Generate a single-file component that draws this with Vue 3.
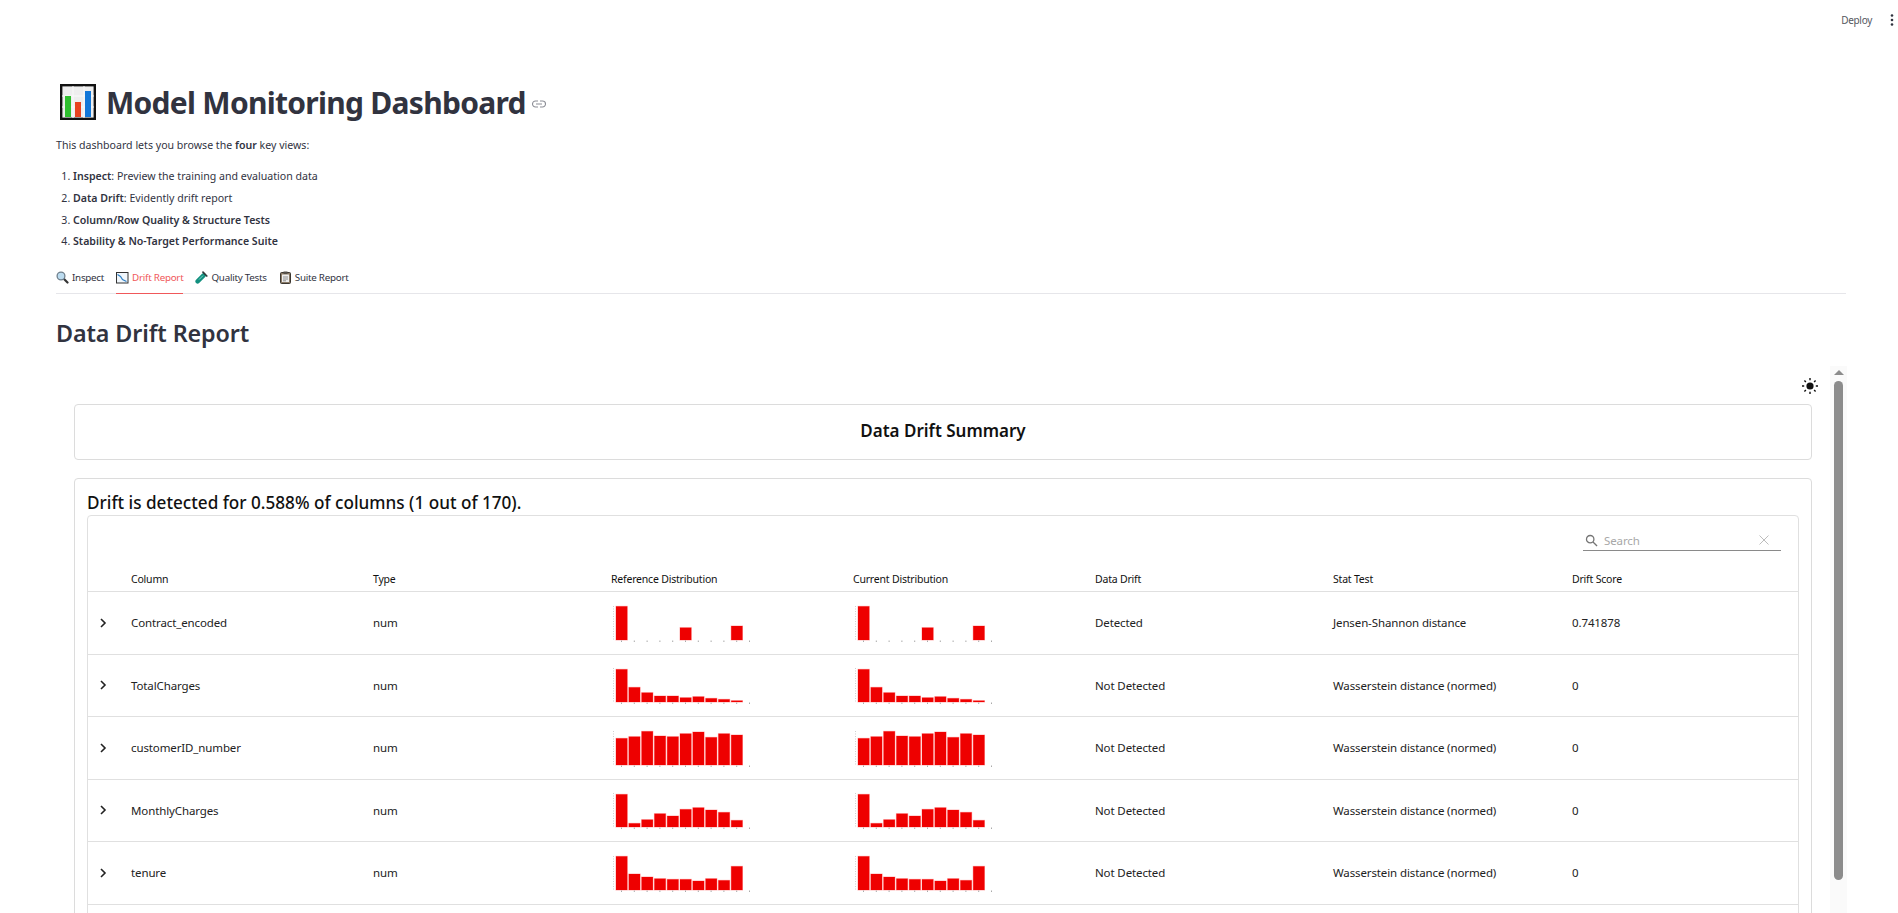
<template>
  <div class="app">
    <header class="toolbar">
      <span class="deploy">Deploy</span>
      <svg class="kebab" viewBox="0 0 4 14" width="4" height="14">
        <circle cx="2" cy="2.5" r="1.3" />
        <circle cx="2" cy="7" r="1.3" />
        <circle cx="2" cy="11.5" r="1.3" />
      </svg>
    </header>

    <main class="main">
      <h1 class="title">
        <svg class="title-icon" viewBox="0 0 36 36" width="36" height="36">
          <rect x="1.2" y="1.2" width="33.6" height="33.6" fill="#eeeeee" stroke="#111" stroke-width="2.4" />
          <path d="M2 12h32M2 23h32M13 2v32M24 2v32" stroke="#fafafa" stroke-width="1" />
          <rect x="5" y="12" width="6" height="21" fill="#2fbf2f" />
          <rect x="15" y="18" width="6" height="15" fill="#e8431f" />
          <rect x="25" y="7" width="6" height="26" fill="#1277d8" />
        </svg>
        <span>Model Monitoring Dashboard</span>
        <svg class="link-icon" viewBox="0 0 14 8" width="14" height="8" fill="none" stroke="#8c8e96" stroke-width="1.1">
          <path d="M6 1H3.5a3 3 0 0 0 0 6H6M8 1h2.5a3 3 0 0 1 0 6H8M4 4h6" />
        </svg>
      </h1>

      <p class="intro">This dashboard lets you browse the <strong>four</strong> key views:</p>
      <ol class="views">
        <li><strong>Inspect</strong>: Preview the training and evaluation data</li>
        <li><strong>Data Drift</strong>: Evidently drift report</li>
        <li><strong>Column/Row Quality &amp; Structure Tests</strong></li>
        <li><strong>Stability &amp; No-Target Performance Suite</strong></li>
      </ol>

      <nav class="tabs">
        <div class="tab">
          <svg viewBox="0 0 13 13" width="13" height="13">
            <path d="M7.5 7.5l4 4" stroke="#333" stroke-width="2.2" stroke-linecap="round" />
            <circle cx="5" cy="5" r="3.9" fill="#bcdcf0" stroke="#6f7f8c" stroke-width="1.3" />
          </svg>
          <span>Inspect</span>
        </div>
        <div class="tab active">
          <svg viewBox="0 0 13 13" width="13" height="13" fill="none">
            <rect x="0.5" y="1.5" width="11.5" height="10.5" fill="#f0f6fb" stroke="#333" />
            <path d="M1.5 3.5l3 2 2 3 4 2" stroke="#2f7fc4" stroke-width="1.2" />
          </svg>
          <span>Drift Report</span>
        </div>
        <div class="tab">
          <svg viewBox="0 0 13 13" width="13" height="13" fill="none">
            <path d="M2.6 10.4L8.6 4.4" stroke="#12907f" stroke-width="4.4" stroke-linecap="round" />
            <path d="M4 8.6L8 4.6" stroke="#7fd6c8" stroke-width="1" />
            <path d="M8 1.2l3.8 3.8" stroke="#2f3a3a" stroke-width="1.7" stroke-linecap="round" />
          </svg>
          <span>Quality Tests</span>
        </div>
        <div class="tab">
          <svg viewBox="0 0 13 13" width="13" height="13">
            <rect x="1.5" y="1.5" width="10" height="11" rx="1" fill="#8a7a66" stroke="#3b3630" />
            <rect x="3" y="3.5" width="7" height="7.5" fill="#eeeeee" />
            <rect x="4.5" y="0.5" width="4" height="2.5" fill="#55504a" />
            <path d="M4 6h5M4 8h5M4 9.8h3" stroke="#777" stroke-width="0.8" />
          </svg>
          <span>Suite Report</span>
        </div>
      </nav>

      <h2 class="section-title">Data Drift Report</h2>

      <section class="report">
        <div class="report-body">
          <div class="theme-row">
            <svg viewBox="0 0 16 16" width="16" height="16" fill="#111">
              <circle cx="8" cy="8" r="3.6" />
              <path d="M8 0v2.2M8 13.8V16M0 8h2.2M13.8 8H16M2.4 2.4l1.5 1.5M12.1 12.1l1.5 1.5M2.4 13.6l1.5-1.5M12.1 3.9l1.5-1.5" stroke="#111" stroke-width="1.4" />
            </svg>
          </div>

          <div class="card summary">Data Drift Summary</div>

          <div class="card drift-card">
            <h3 class="drift-title">Drift is detected for 0.588% of columns (1 out of 170).</h3>
            <div class="table-card">
              <div class="search-row">
                <div class="search">
                  <svg viewBox="0 0 14 14" width="13" height="13" fill="none" stroke="#757575" stroke-width="1.4">
                    <circle cx="5.6" cy="5.6" r="4" />
                    <path d="M8.6 8.6l4.4 4.4" />
                  </svg>
                  <span class="search-text">Search</span>
                  <svg class="clear" viewBox="0 0 10 10" width="10" height="10" stroke="#bdbdbd" stroke-width="1">
                    <path d="M0.5 0.5l9 9M9.5 0.5l-9 9" />
                  </svg>
                </div>
              </div>

              <div class="row head">
                <div></div>
                <div v-for="col in columns" :key="col">{{ col }}</div>
              </div>

              <div v-for="row in rows" :key="row.name" class="row">
                <div class="chevron">
                  <svg viewBox="0 0 8 10" width="8" height="10" fill="none" stroke="#222" stroke-width="1.6">
                    <path d="M2 1l4 4-4 4" />
                  </svg>
                </div>
                <div>{{ row.name }}</div>
                <div>num</div>
                <div v-for="n in 2" :key="n">
                  <svg class="spark" viewBox="0 0 140 42" width="140" height="42">
                    <path d="M1.5 4V38" stroke="#cfcfcf" stroke-dasharray="1 1.5" fill="none" />
                    <rect
                      v-for="(h, i) in row.bars"
                      :key="i"
                      :x="4 + i * 12.8"
                      :y="38 - h / 3"
                      width="11.3"
                      :height="h / 3"
                      fill="#ee0000"
                      stroke="#ff0000"
                      stroke-opacity="0.3"
                    />
                    <rect v-for="i in 11" :key="'t' + i" :x="9 + (i - 1) * 12.8" y="38.5" width="1" height="1.5" fill="#aaaaaa" />
                  </svg>
                </div>
                <div>{{ row.drift }}</div>
                <div>{{ row.test }}</div>
                <div>{{ row.score }}</div>
              </div>
            </div>
          </div>
        </div>

        <div class="scrollbar">
          <span class="arrow"></span>
          <span class="thumb"></span>
        </div>
      </section>
    </main>
  </div>
</template>

<script setup>
const columns = ['Column', 'Type', 'Reference Distribution', 'Current Distribution', 'Data Drift', 'Stat Test', 'Drift Score']

const wasserstein = 'Wasserstein distance (normed)'

// bar heights read off the reference, at 3x
const rows = [
  { name: 'Contract_encoded', bars: [101, 0, 0, 0, 0, 37, 0, 0, 0, 42], drift: 'Detected', test: 'Jensen-Shannon distance', score: '0.741878' },
  { name: 'TotalCharges', bars: [98, 44, 28, 18, 18, 13, 16, 11, 8, 4], drift: 'Not Detected', test: wasserstein, score: '0' },
  { name: 'customerID_number', bars: [80, 85, 101, 87, 85, 94, 99, 83, 94, 90], drift: 'Not Detected', test: wasserstein, score: '0' },
  { name: 'MonthlyCharges', bars: [98, 11, 22, 40, 33, 53, 58, 51, 44, 20], drift: 'Not Detected', test: wasserstein, score: '0' },
  { name: 'tenure', bars: [101, 48, 39, 34, 32, 32, 27, 34, 29, 71], drift: 'Not Detected', test: wasserstein, score: '0' }
]
</script>

<style>
html,
body {
  margin: 0;
  background: #fff;
}
</style>

<style scoped>
.app {
  height: 913px;
  overflow: hidden;
  font-family: "Noto Sans", "Liberation Sans", sans-serif;
  color: #31333f;
  background: #fff;
}

.toolbar {
  height: 40px;
  display: flex;
  align-items: center;
  justify-content: flex-end;
  gap: 18px;
  padding-right: 4px;
}

.deploy {
  font-size: 10px;
  letter-spacing: -0.3px;
  color: #55575f;
}

.kebab {
  fill: #31333f;
}

.main {
  padding-left: 56px;
}

.title {
  display: flex;
  align-items: center;
  height: 46px;
  margin: 39px 0 0;
  font-size: 30px;
  font-weight: 700;
  letter-spacing: -0.72px;
}

.title-icon {
  margin: 0 10px 0 4px;
}

.link-icon {
  margin: 4px 0 0 6px;
}

.intro {
  margin: 10px 0 0;
  height: 20px;
  line-height: 20px;
  font-size: 10.6px;
}

.views {
  margin: 11px 0 0;
  padding: 0 0 0 17px;
  font-size: 10.6px;
}

.views li {
  height: 21.8px;
  line-height: 21.8px;
  padding-left: 0;
}

strong {
  font-weight: 600;
}

.tabs {
  display: flex;
  gap: 12px;
  height: 35px;
  margin: 6px 0 0;
  border-bottom: 1px solid #e6e6ea;
  box-sizing: border-box;
  width: 1790px;
  font-size: 9.8px;
  letter-spacing: -0.25px;
}

.tab {
  display: flex;
  align-items: center;
  gap: 3px;
  height: 35px;
  padding-top: 2px;
  box-sizing: border-box;
}

.tab.active {
  color: #f0585a;
  border-bottom: 1px solid #f0585a;
}

.section-title {
  margin: 21px 0 0;
  height: 36px;
  line-height: 36px;
  font-size: 23.3px;
  letter-spacing: -0.1px;
  font-weight: 600;
}

.report {
  display: flex;
  margin-top: 11px;
  width: 1791px;
}

.report-body {
  flex: 1;
  padding-left: 18px;
  padding-right: 12px;
}

.theme-row {
  display: flex;
  justify-content: flex-end;
  height: 42px;
  padding-top: 16px;
  box-sizing: border-box;
}

.card {
  margin-right: 6px;
  border: 1px solid #dcdcdc;
  border-radius: 4px;
  box-sizing: border-box;
}

.summary {
  height: 56px;
  line-height: 52px;
  text-align: center;
  font-size: 17px;
  font-weight: 600;
  color: #111;
}

.drift-card {
  margin-top: 18px;
  padding: 12px 12px 0;
}

.drift-title {
  margin: 0;
  height: 24px;
  line-height: 24px;
  font-size: 17.15px;
  font-weight: 500;
  color: #111;
}

.table-card {
  border: 1px solid #e0e0e0;
  border-radius: 4px;
  min-height: 420px;
  font-size: 11.5px;
  letter-spacing: -0.12px;
  color: #222;
}

.search-row {
  height: 34px;
  display: flex;
  justify-content: flex-end;
  padding: 0 17px 0 0;
}

.search {
  width: 198px;
  height: 35px;
  box-sizing: border-box;
  padding: 14px 12px 0 2px;
  display: flex;
  align-items: center;
  gap: 6px;
  border-bottom: 1px solid #8a8a8a;
}

.search-text {
  flex: 1;
  color: #a8a8a8;
  font-size: 11.5px;
}

.row {
  display: grid;
  grid-template-columns: 43px 242px 238px 242px 242px 238px 239px 1fr;
  align-items: center;
  height: 62.5px;
  border-bottom: 1px solid #e0e0e0;
  box-sizing: border-box;
}

.row.head {
  height: 42px;
  padding-top: 16px;
  font-size: 10.5px;
  letter-spacing: -0.2px;
  color: #111;
}

.chevron {
  padding-left: 11px;
  display: flex;
}

.spark {
  display: block;
  margin-left: 1px;
}

.scrollbar {
  width: 17px;
  margin-top: 4px;
  height: 560px;
  background: #fafafa;
  display: flex;
  flex-direction: column;
  align-items: center;
}

.arrow {
  margin-top: 4px;
  width: 0;
  height: 0;
  border-left: 5px solid transparent;
  border-right: 5px solid transparent;
  border-bottom: 5px solid #8c8c8c;
}

.thumb {
  margin-top: 6px;
  width: 9px;
  height: 499px;
  border-radius: 5px;
  background: #8c8c8c;
}
</style>
